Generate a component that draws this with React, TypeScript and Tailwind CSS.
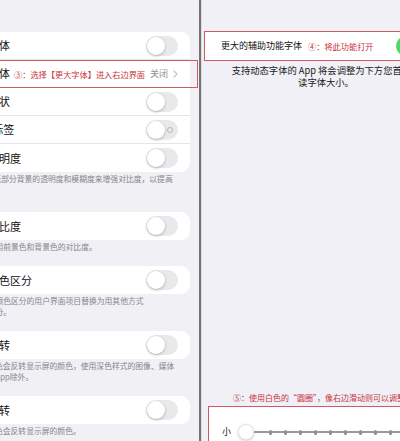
import React from "react";

const Toggle = ({ on = false, ring = false }: { on?: boolean; ring?: boolean }) => (
  <div
    className={
      on
        ? "relative w-[32px] h-[20px] rounded-full bg-[#4cd964] shrink-0"
        : "relative w-[32px] h-[20px] rounded-full bg-[#e9e9eb] shrink-0"
    }
  >
    <div
      className={
        on
          ? "absolute top-[1px] right-[1px] w-[18px] h-[18px] rounded-full bg-white shadow-[0_1px_3px_rgba(0,0,0,0.25)]"
          : "absolute top-[1px] left-[1px] w-[18px] h-[18px] rounded-full bg-white shadow-[0_1px_3px_rgba(0,0,0,0.25)]"
      }
    />
    {ring && (
      <div className="absolute right-[5px] top-[7px] w-[6px] h-[6px] rounded-full border border-[#b4b4b8]" />
    )}
  </div>
);

const Row = ({
  label,
  last = false,
  children,
}: {
  label: string;
  last?: boolean;
  children?: React.ReactNode;
}) => (
  <div className="pl-[12px]">
    <div
      className={
        last
          ? "h-[28px] flex items-center pr-[12px]"
          : "h-[28px] flex items-center pr-[12px] border-b border-[#e4e4e9]"
      }
    >
      <span className="text-[11px] text-[#111] whitespace-nowrap">{label}</span>
      <div className="ml-auto flex items-center">{children}</div>
    </div>
  </div>
);

const Foot = ({ lines }: { lines: { t: string; pl: string }[] }) => (
  <div className="mt-[1px]">
    {lines.map((l, i) => (
      <div
        key={i}
        className={`whitespace-nowrap text-[7.8px] leading-[11px] text-[#86868b] ${l.pl}`}
      >
        {l.t}
      </div>
    ))}
  </div>
);

const Chevron = () => (
  <svg width="5" height="8" viewBox="0 0 5 8" className="ml-[5px]">
    <path d="M1 1 L4 4 L1 7" fill="none" stroke="#c4c4c7" strokeWidth="1.2" strokeLinecap="round" strokeLinejoin="round" />
  </svg>
);

export default function App() {
  const ticks = Array.from({ length: 12 });
  return (
    <div className="w-[400px] h-[441px] flex overflow-hidden bg-[#f0f0f5] font-['Noto_Sans_CJK_SC','Noto_Sans',sans-serif]">
      {/* left panel */}
      <div className="w-[199px] h-full overflow-hidden bg-[#f0f0f5] shrink-0">
        <div className="ml-[-46px] w-[236px] pt-[32px]">
          <div className="bg-white rounded-[9px]">
            <Row label="加粗字体">
              <Toggle />
            </Row>
            <div className="relative">
              <Row label="更大字体">
                <span className="text-[9px] text-[#8e8e93]">关闭</span>
                <Chevron />
              </Row>
              <div className="absolute top-0 bottom-0 left-[-4px] right-[-8px] border border-[#cf5a63] pointer-events-none" />
              <div className="absolute top-0 bottom-0 left-[60px] flex items-center">
                <span className="text-[8.2px] text-[#c8333d] whitespace-nowrap">③：选择【更大字体】进入右边界面</span>
              </div>
            </div>
            <Row label="按钮形状">
              <Toggle />
            </Row>
            <Row label="开/关标签">
              <Toggle ring />
            </Row>
            <Row label="降低透明度" last>
              <Toggle />
            </Row>
          </div>
          <Foot
            lines={[
              { t: "通过降低部分背景的透明度和模糊度来增强对比度，以提高", pl: "pl-[16px]" },
              { t: "易读性。", pl: "pl-[16px]" },
            ]}
          />

          <div className="bg-white rounded-[9px] mt-[17px]">
            <Row label="增强对比度" last>
              <Toggle />
            </Row>
          </div>
          <Foot lines={[{ t: "增强应用前景色和背景色的对比度。", pl: "pl-[18px]" }]} />

          <div className="bg-white rounded-[9px] mt-[14px]">
            <Row label="不以颜色区分" last>
              <Toggle />
            </Row>
          </div>
          <Foot
            lines={[
              { t: "将仅以颜色区分的用户界面项目替换为用其他方式", pl: "pl-[18px]" },
              { t: "进行区分。", pl: "pl-[18px]" },
            ]}
          />

          <div className="bg-white rounded-[9px] mt-[14px]">
            <Row label="智能反转" last>
              <Toggle />
            </Row>
          </div>
          <Foot
            lines={[
              { t: "智能反转颜色会反转显示屏的颜色，使用深色样式的图像、媒体", pl: "pl-[2px]" },
              { t: "和某些App除外。", pl: "pl-[18px]" },
            ]}
          />

          <div className="bg-white rounded-[9px] mt-[14px]">
            <Row label="经典反转" last>
              <Toggle />
            </Row>
          </div>
          <Foot lines={[{ t: "经典反转颜色会反转显示屏的颜色。", pl: "pl-[2px]" }]} />
        </div>
      </div>

      {/* divider */}
      <div className="w-[2px] h-full bg-[#737373] shrink-0" />

      {/* right panel */}
      <div className="flex-1 h-full overflow-hidden bg-[#f0f0f6] border-l border-[#dcdce2]">
        <div className="w-[248px] h-full flex flex-col pt-[31px]">
          <div className="ml-[2px] w-[260px] h-[30px] shrink-0 border border-[#cf5a63] bg-white flex items-center pl-[16px]">
            <span className="text-[9px] text-[#111] whitespace-nowrap">更大的辅助功能字体</span>
            <span className="ml-[6px] text-[8.2px] text-[#c8333d] whitespace-nowrap">④：将此功能打开</span>
            <div className="ml-[22px]">
              <Toggle on />
            </div>
          </div>
          <div className="mt-[3px] text-center text-[9.3px] leading-[12px] text-[#222]">
            <div className="whitespace-nowrap">支持动态字体的 App 将会调整为下方您首选阅</div>
            <div className="whitespace-nowrap">读字体大小。</div>
          </div>

          <div className="mt-auto pl-[31px] text-[8px] leading-[10px] text-[#c8333d] whitespace-nowrap">
            ⑤：使用白色的“圆圈”，像右边滑动则可以调整字体大小
          </div>
          <div className="mt-[3px] ml-[6px] w-[260px] h-[35px] shrink-0 border border-b-0 border-[#cf5a63] bg-white pt-[17px] pl-[13px] flex items-start">
            <div className="h-[16px] flex items-center">
              <span className="text-[9px] text-[#222]">小</span>
            </div>
            <div className="ml-[7px] w-[16px] h-[16px] rounded-full bg-white border border-[#e6e6e8] shadow-[0_1px_3px_rgba(0,0,0,0.2)] shrink-0" />
            <div className="h-[16px] flex items-center">
              <div className="w-[15px] h-[2px] bg-[#9a9a9e]" />
              {ticks.map((_, i) => (
                <React.Fragment key={i}>
                  <div className="w-[3px] h-[5px] rounded-full bg-[#8e8e93]" />
                  <div className="w-[12px] h-[2px] bg-[#9a9a9e]" />
                </React.Fragment>
              ))}
            </div>
          </div>
        </div>
      </div>
    </div>
  );
}
